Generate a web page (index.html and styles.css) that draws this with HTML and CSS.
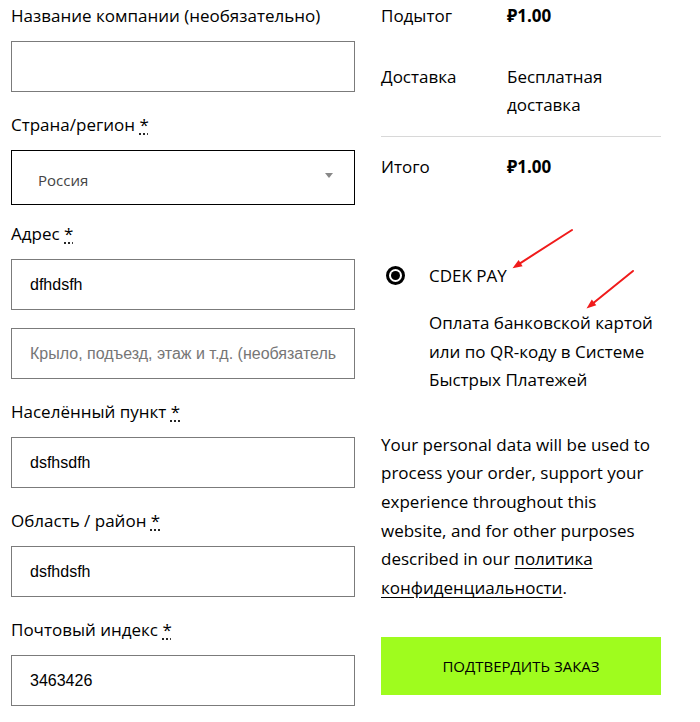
FILE: index.html
```html
<!DOCTYPE html>
<html lang="ru">
<head>
<meta charset="utf-8">
<title>Оформление заказа</title>
<link rel="stylesheet" href="styles.css">
</head>
<body>
<div class="page">
  <form class="billing">
    <div class="form-row">
      <label class="lbl">Название компании (необязательно)</label>
      <input class="field" type="text" value="">
    </div>
    <div class="form-row">
      <label class="lbl">Страна/регион <abbr class="req" title="обязательно">*</abbr></label>
      <div class="select">
        <span class="select-text">Россия</span>
        <span class="select-arrow"></span>
      </div>
    </div>
    <div class="form-row form-row-after-select">
      <label class="lbl">Адрес <abbr class="req" title="обязательно">*</abbr></label>
      <input class="field" type="text" value="dfhdsfh">
      <input class="field field-second" type="text" placeholder="Крыло, подъезд, этаж и т.д. (необязательно)">
    </div>
    <div class="form-row">
      <label class="lbl">Населённый пункт <abbr class="req" title="обязательно">*</abbr></label>
      <input class="field" type="text" value="dsfhsdfh">
    </div>
    <div class="form-row">
      <label class="lbl">Область / район <abbr class="req" title="обязательно">*</abbr></label>
      <input class="field" type="text" value="dsfhdsfh">
    </div>
    <div class="form-row">
      <label class="lbl">Почтовый индекс <abbr class="req" title="обязательно">*</abbr></label>
      <input class="field" type="text" value="3463426">
    </div>
  </form>

  <aside class="review">
    <div class="totals">
      <div class="t-row t-first">
        <div class="t-label">Подытог</div>
        <div class="t-value bold">₽1.00</div>
      </div>
      <div class="t-row t-ship">
        <div class="t-label">Доставка</div>
        <div class="t-value">Бесплатная доставка</div>
      </div>
      <div class="t-row">
        <div class="t-label">Итого</div>
        <div class="t-value bold">₽1.00</div>
      </div>
    </div>

    <div class="payment">
      <div class="method">
        <span class="radio"><span class="radio-dot"></span></span>
        <span class="method-name">CDEK PAY</span>
      </div>
      <p class="method-desc">Оплата банковской картой или по QR-коду в Системе Быстрых Платежей</p>
    </div>

    <p class="privacy">Your personal data will be used to process your order, support your experience throughout this website, and for other purposes described in our <a href="#" class="privacy-link">политика конфиденциальности</a>.</p>

    <button class="place-order" type="button">ПОДТВЕРДИТЬ ЗАКАЗ</button>
  </aside>
</div>

<svg class="annotations" width="700" height="722" viewBox="0 0 700 722" xmlns="http://www.w3.org/2000/svg">
  <line x1="572" y1="230" x2="520" y2="263.3" stroke="#f01b1b" stroke-width="2" stroke-linecap="round"/>
  <polygon points="512.5,268.3 522.6,266.2 518.6,260.0" fill="#f01b1b"/>
  <line x1="633" y1="271" x2="594" y2="302.5" stroke="#f01b1b" stroke-width="2" stroke-linecap="round"/>
  <polygon points="586.5,308.5 596.3,305.2 591.8,299.6" fill="#f01b1b"/>
</svg>
</body>
</html>
```

FILE: styles.css
```css
html, body {
  margin: 0;
  padding: 0;
  background: #fff;
}

body {
  font-family: "Open Sans", "Noto Sans", sans-serif;
  font-size: 17px;
  color: #000;
  width: 700px;
  height: 722px;
  overflow: hidden;
  position: relative;
}

.page {
  display: grid;
  grid-template-columns: 344px 280px;
  column-gap: 26px;
  padding: 2px 0 0 11px;
}

/* ---------- left form ---------- */
.billing {
  display: flex;
  flex-direction: column;
}

.form-row {
  display: flex;
  flex-direction: column;
  margin-bottom: 19px;
}

.form-row-after-select {
  margin-top: -2px;
}

.lbl {
  display: block;
  line-height: 27px;
  margin-bottom: 12px;
  white-space: nowrap;
}

.req {
  text-decoration: underline dotted;
  text-underline-offset: 3px;
  cursor: help;
}

.field {
  box-sizing: border-box;
  width: 344px;
  height: 51px;
  margin: 0;
  border: 1px solid #7b7b7b;
  border-radius: 0;
  padding: 0 18px;
  font-family: "Liberation Sans", Arial, sans-serif;
  font-size: 16px;
  color: #000;
  background: #fff;
  outline: none;
}

.field::placeholder {
  color: #767676;
}

.field-second {
  margin-top: 18px;
}

.select {
  box-sizing: border-box;
  width: 344px;
  height: 55px;
  border: 1px solid #000;
  display: flex;
  align-items: center;
  justify-content: space-between;
  padding: 0 21px 0 26px;
  margin-bottom: -2px;
}

.select-text {
  font-size: 15px;
  color: #444;
  line-height: 20px;
  padding-top: 4px;
}

.select-arrow {
  width: 0;
  height: 0;
  border-left: 4.5px solid transparent;
  border-right: 4.5px solid transparent;
  border-top: 5px solid #888;
  margin-top: -4px;
}

/* ---------- right column ---------- */
.review {
  display: flex;
  flex-direction: column;
}

.totals {
  display: flex;
  flex-direction: column;
}

.t-row {
  display: grid;
  grid-template-columns: 126px 1fr;
  line-height: 28.6px;
  padding: 16px 0;
}

.t-first {
  padding-top: 0;
}

.t-ship {
  border-bottom: 1px solid #d8d8d8;
}

.bold {
  font-weight: 700;
}

.payment {
  margin-top: 64px;
}

.method {
  display: flex;
  align-items: center;
  height: 29px;
}

.radio {
  box-sizing: border-box;
  width: 19px;
  height: 19px;
  border: 3px solid #000;
  border-radius: 50%;
  display: flex;
  align-items: center;
  justify-content: center;
  margin-left: 5px;
  margin-right: 24px;
}

.radio-dot {
  width: 9px;
  height: 9px;
  border-radius: 50%;
  background: #000;
}

.method-name {
  line-height: 28.6px;
}

.method-desc {
  margin: 19px 0 0 48px;
  line-height: 28.5px;
}

.privacy {
  margin: 36px 0 0 0;
  line-height: 28.6px;
}

.privacy-link {
  color: #000;
  text-decoration: underline;
  text-underline-offset: 3px;
}

.place-order {
  margin-top: 35px;
  width: 280px;
  height: 58px;
  border: none;
  border-radius: 0;
  background: #9ffc1e;
  color: #000;
  font-family: "Open Sans", "Noto Sans", sans-serif;
  font-size: 15px;
  padding: 0;
  cursor: pointer;
}

/* ---------- annotation overlay ---------- */
.annotations {
  position: absolute;
  left: 0;
  top: 0;
  pointer-events: none;
}
```
